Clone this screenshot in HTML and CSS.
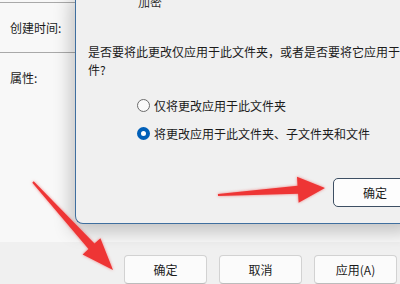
FILE: index.html
```html
<!DOCTYPE html>
<html lang="zh-CN">
<head>
<meta charset="utf-8">
<link rel="stylesheet" href="styles.css">
</head>
<body>
<div class="window">
  <div class="content">
    <div class="props">
      <div class="divider"></div>
      <div class="prop-row">创建时间:</div>
      <div class="divider"></div>
      <div class="prop-row">属性:</div>
    </div>
  </div>
  <div class="footer">
    <button class="btn">确定</button>
    <button class="btn">取消</button>
    <button class="btn">应用(A)</button>
  </div>

  <div class="dialog">
    <div class="enc">加密</div>
    <p class="question">是否要将此更改仅应用于此文件夹，或者是否要将它应用于所有子文件夹和文<br>件?</p>
    <div class="radios">
      <label class="radio-row"><span class="radio"></span>仅将更改应用于此文件夹</label>
      <label class="radio-row"><span class="radio checked"></span>将更改应用于此文件夹、子文件夹和文件</label>
    </div>
    <button class="btn btn-focus">确定</button>
  </div>

  <svg class="arrows" width="400" height="284" viewBox="0 0 400 284">
    <polygon points="32.3,182.7 88.5,249 82.6,254.4 113,270 100.4,238.2 94.5,243.6 33.7,181.3"/>
    <polygon points="218.1,196 298.1,193.8 298.6,202.8 325,188 297,176.8 297.5,185.8 217.9,194"/>
  </svg>
</div>
</body>
</html>
```

FILE: styles.css
```css
html, body {
  margin: 0;
  padding: 0;
}
body {
  width: 400px;
  height: 284px;
  overflow: hidden;
  font-family: "Noto Sans CJK SC", "Microsoft YaHei", sans-serif;
  font-size: 12px;
  color: #1b1b1b;
  background: #f0f0f0;
}
.window {
  position: relative;
  width: 400px;
  height: 284px;
  display: flex;
  flex-direction: column;
}
.content {
  height: 243px;
  background: #f8f8f8;
}
.props {
  width: 76px;
  padding-top: 2px;
}
.divider {
  height: 1px;
  background: #a9a9a9;
}
.prop-row {
  height: 49px;
  line-height: 49px;
  padding-left: 10px;
}
.footer {
  flex: 1;
  display: flex;
  justify-content: flex-end;
  gap: 12px;
  padding: 13px 3px 0 0;
  background: #f0f0f0;
}
.btn {
  font-family: inherit;
  font-size: 12px;
  color: #1b1b1b;
  width: 83px;
  height: 29px;
  background: #fbfbfb;
  border: 1px solid #d2d2d2;
  border-bottom-color: #bcbcbc;
  border-radius: 4px;
  padding: 0;
}
.dialog {
  position: absolute;
  left: 75px;
  top: -10px;
  width: 340px;
  height: 234px;
  box-sizing: border-box;
  background: #f0f0f0;
  border-left: 1px solid #3f6f9f;
  border-bottom: 1px solid #3f6f9f;
  border-bottom-left-radius: 8px;
  box-shadow: -4px 8px 18px rgba(0, 0, 0, 0.22);
  padding: 4px 0 0 12px;
}
.enc {
  line-height: 16px;
  padding-left: 50px;
  color: #333;
}
.question {
  margin: 33px 0 0 0;
  line-height: 18px;
  white-space: nowrap;
}
.radios {
  margin-top: 16px;
  padding-left: 49px;
  display: flex;
  flex-direction: column;
  gap: 8px;
}
.radio-row {
  height: 20px;
  display: flex;
  align-items: center;
  gap: 4px;
}
.radio {
  width: 11px;
  height: 11px;
  border: 1px solid #6b6b6b;
  border-radius: 50%;
  background: #fafafa;
}
.radio.checked {
  width: 5px;
  height: 5px;
  border: 4px solid #005fb8;
  background: #fff;
}
.btn-focus {
  margin: 35px 0 0 245px;
  width: 90px;
  height: 29px;
  border: 1px solid #3d4f63;
  border-radius: 5px;
  background: #fdfdfd;
  box-shadow: 0 0 0 1px #f0f0f0;
  padding-right: 6px;
}
.arrows {
  position: absolute;
  left: 0;
  top: 0;
  fill: #ee3535;
  filter: drop-shadow(0 0 1.5px rgba(238, 60, 60, 0.6));
}
```
